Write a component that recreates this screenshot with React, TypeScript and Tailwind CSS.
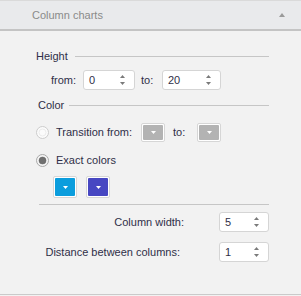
import React from 'react'

const font = { fontFamily: '"Liberation Sans", Arial, sans-serif' }

function SpinArrows() {
  return (
    <svg width="7" height="12" viewBox="0 0 7 12" className="shrink-0">
      <path d="M3.5 1 L6 4 L1 4 Z" fill="#7a7a7a" />
      <path d="M1 8 L6 8 L3.5 11 Z" fill="#7a7a7a" />
    </svg>
  )
}

function Spinner({ value, width }: { value: string; width: string }) {
  return (
    <div className={`${width} h-[20px] flex items-center justify-between bg-white border border-[#d5d5d5] rounded-[3px] pl-[5px] pr-[8px]`}>
      <span className="text-[11px] text-[#2f2f48]">{value}</span>
      <SpinArrows />
    </div>
  )
}

function ColorButton({ color, tall }: { color: string; tall?: boolean }) {
  return (
    <div
      className={`w-[24px] ${tall ? 'h-[22px]' : 'h-[19px]'} rounded-[2px] border border-[#d6d6d6] p-[1px] bg-white`}
    >
      <div className="w-full h-full rounded-[1px] flex items-center justify-center" style={{ backgroundColor: color }}>
        <svg width="5" height="3" viewBox="0 0 5 3">
          <path d="M0 0 L5 0 L2.5 3 Z" fill="#ffffff" />
        </svg>
      </div>
    </div>
  )
}

function Radio({ checked }: { checked?: boolean }) {
  return (
    <svg width="13" height="13" viewBox="0 0 13 13" className="shrink-0">
      <circle cx="6.5" cy="6.5" r="6" fill={checked ? '#f4f4f4' : '#fbfbfb'} stroke={checked ? '#a9a9a9' : '#cccccc'} />
      {checked ? (
        <circle cx="6.5" cy="6.5" r="3.5" fill="#707070" stroke="#5a5a5a" strokeWidth="0.5" />
      ) : (
        <circle cx="6.5" cy="6.5" r="3.5" fill="none" stroke="#ececec" />
      )}
    </svg>
  )
}

export default function App() {
  return (
    <div className="w-[301px] h-[296px] bg-[#f2f2f2] flex flex-col text-[#2f2f48]" style={font}>
      {/* header */}
      <div className="h-[31px] bg-[#e9eaec] border-t border-[#dadada] border-b-2 border-b-[#c4c4c4] flex items-center justify-between pl-[32px] pr-[16px] shrink-0">
        <span className="text-[11px] text-[#8a8a8a]">Column charts</span>
        <svg width="6" height="4" viewBox="0 0 6 4">
          <path d="M3 0 L6 4 L0 4 Z" fill="#9a9a9a" />
        </svg>
      </div>

      <div className="flex-1 flex flex-col pl-[36px] pr-[32px] border-b border-[#cacaca]">
        {/* Height */}
        <div className="mt-[18px] h-[14px] flex items-center">
          <span className="text-[11px]">Height</span>
          <div className="flex-1 ml-[7px] h-px bg-[#c6c6c6]" />
        </div>
        <div className="mt-[7px] flex items-center">
          <span className="ml-[15px] w-[32px] text-[11px]">from:</span>
          <Spinner value="0" width="w-[52px]" />
          <span className="ml-[6px] w-[21px] text-[11px]">to:</span>
          <Spinner value="20" width="w-[59px]" />
        </div>

        {/* Color */}
        <div className="mt-[8px] h-[14px] flex items-center">
          <span className="ml-[2px] text-[11px]">Color</span>
          <div className="flex-1 ml-[5px] h-px bg-[#c6c6c6]" />
        </div>
        <div className="mt-[11px] h-[19px] flex items-center">
          <Radio />
          <span className="ml-[7px] w-[85px] text-[11px]">Transition from:</span>
          <ColorButton color="#b3b3b3" />
          <span className="ml-[8px] w-[24px] text-[11px]">to:</span>
          <ColorButton color="#b3b3b3" />
        </div>
        <div className="mt-[8px] h-[20px] flex items-center">
          <Radio checked />
          <span className="ml-[7px] text-[11px]">Exact colors</span>
        </div>
        <div className="mt-[6px] ml-[17px] flex items-center gap-[9px]">
          <ColorButton color="#0b9ddd" tall />
          <ColorButton color="#4747c2" tall />
        </div>
        <div className="mt-[6px] ml-[3px] h-px bg-[#c6c6c6]" />

        {/* widths */}
        <div className="mt-[7px] flex items-center justify-end">
          <span className="mr-[35px] text-[11px]">Column width:</span>
          <Spinner value="5" width="w-[50px]" />
        </div>
        <div className="mt-[10px] flex items-center justify-end">
          <span className="mr-[39px] text-[11px]">Distance between columns:</span>
          <Spinner value="1" width="w-[50px]" />
        </div>
      </div>
      <div className="h-px shrink-0" />
    </div>
  )
}
